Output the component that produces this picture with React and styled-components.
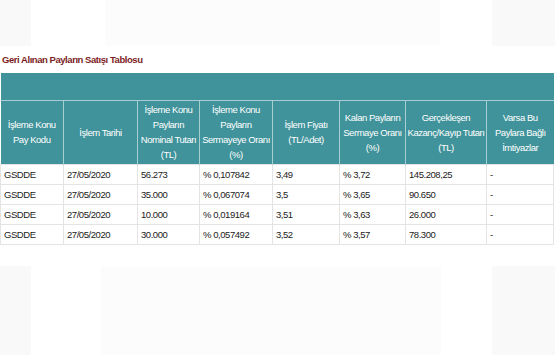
import React from 'react';
import styled, { createGlobalStyle } from 'styled-components';

const GlobalStyle = createGlobalStyle`
    body {
        margin: 0;
        background: #fff;
        font-family: "Liberation Sans", Arial, sans-serif;
    }
`;

const Page = styled.div`
    width: 555px;
    height: 355px;
    display: flex;
    flex-direction: column;
    overflow: hidden;
`;

const GhostBand = styled.div`
    height: ${props => props.h}px;
    margin-top: ${props => props.mt || 0}px;
    display: flex;
`;

const Ghost = styled.div`
    width: ${props => props.w}px;
    margin-left: ${props => props.ml || 0}px;
    background: ${props => props.tone || '#f9f9f9'};
`;

const Title = styled.h3`
    margin: 9px 0 8px 2px;
    font-size: 9.5px;
    line-height: 10px;
    font-weight: 700;
    letter-spacing: -0.45px;
    color: #7b1e24;
`;

const Table = styled.table`
    width: 553px;
    border-collapse: collapse;
    table-layout: fixed;
    font-size: 9.5px;
    letter-spacing: -0.45px;
`;

const Band = styled.th`
    height: 27px;
    background: #40939a;
    border-bottom: 1px solid #a7cfd2;
    padding: 0;
`;

const HeadCell = styled.th`
    background: #40939a;
    color: #fff;
    font-weight: 400;
    line-height: 15px;
    height: 63px;
    padding: 0 1px;
    text-align: center;
    vertical-align: middle;
    border-left: 1px solid #a7cfd2;
    &:first-child {
        border-left: none;
    }
`;

const Cell = styled.td`
    height: 19px;
    padding: 0 0 0 3px;
    color: #222;
    border: 1px solid #e4e4e4;
    white-space: nowrap;
    vertical-align: middle;
`;

const columns = [
    { w: 63, label: ['İşleme Konu', 'Pay Kodu'] },
    { w: 74, label: ['İşlem Tarihi'] },
    { w: 62, label: ['İşleme Konu', 'Payların', 'Nominal Tutarı', '(TL)'] },
    { w: 73, label: ['İşleme Konu', 'Payların', 'Sermayeye Oranı', '(%)'] },
    { w: 67, label: ['İşlem Fiyatı', '(TL/Adet)'] },
    { w: 66, label: ['Kalan Payların', 'Sermaye Oranı', '(%)'] },
    { w: 81, label: ['Gerçekleşen', 'Kazanç/Kayıp Tutarı', '(TL)'] },
    { w: 67, label: ['Varsa Bu', 'Paylara Bağlı', 'İmtiyazlar'] },
];

const rows = [
    ['GSDDE', '27/05/2020', '56.273', '% 0,107842', '3,49', '% 3,72', '145.208,25', '-'],
    ['GSDDE', '27/05/2020', '35.000', '% 0,067074', '3,5', '% 3,65', '90.650', '-'],
    ['GSDDE', '27/05/2020', '10.000', '% 0,019164', '3,51', '% 3,63', '26.000', '-'],
    ['GSDDE', '27/05/2020', '30.000', '% 0,057492', '3,52', '% 3,57', '78.300', '-'],
];

function App() {
    return (
        <Page>
            <GlobalStyle />
            <GhostBand h={46}>
                <Ghost w={31} />
                <Ghost w={335} ml={74} tone="#fcfcfc" />
                <Ghost w={63} ml={52} />
            </GhostBand>
            <Title>Geri Alınan Payların Satışı Tablosu</Title>
            <Table>
                <colgroup>
                    {columns.map((c, i) => <col key={i} style={{ width: c.w }} />)}
                </colgroup>
                <thead>
                    <tr><Band colSpan={8} /></tr>
                    <tr>
                        {columns.map((c, i) => (
                            <HeadCell key={i}>
                                {c.label.map((l, j) => <div key={j}>{l}</div>)}
                            </HeadCell>
                        ))}
                    </tr>
                </thead>
                <tbody>
                    {rows.map((r, i) => (
                        <tr key={i}>
                            {r.map((v, j) => <Cell key={j}>{v}</Cell>)}
                        </tr>
                    ))}
                </tbody>
            </Table>
            <GhostBand h={90} mt={21}>
                <Ghost w={31} />
                <Ghost w={340} ml={70} tone="#fcfcfc" />
                <Ghost w={63} ml={51} />
            </GhostBand>
        </Page>
    );
}

export default App;
